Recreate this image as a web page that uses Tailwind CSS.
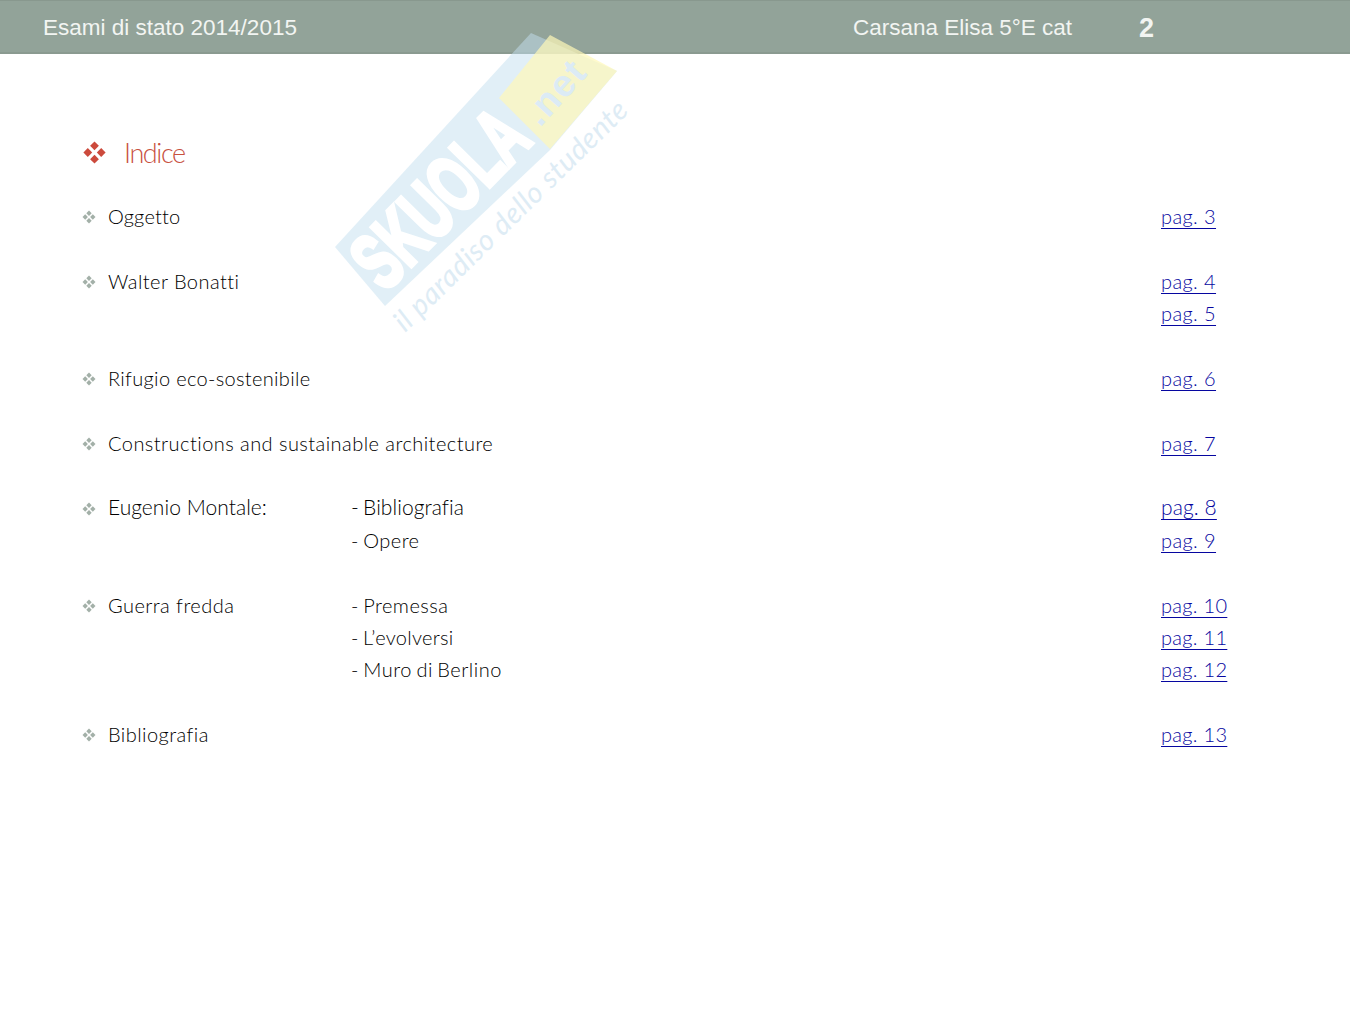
<!DOCTYPE html>
<html lang="it">
<head>
<meta charset="utf-8">
<script src="https://cdn.jsdelivr.net/npm/@tailwindcss/browser@4"></script>
</head>
<body class="bg-white">
<div class="relative w-[1350px] h-[1013px] overflow-hidden bg-white font-['Lato',sans-serif] text-black">
  <header class="flex items-center h-[54px] pl-[43px] pt-[3px] bg-[#92a399] border-t border-t-[#88988e] border-b-2 border-b-[#8a9a90] text-[#f2f5f2] font-['Liberation_Sans',sans-serif] text-[22.5px]">
    <span class="w-[810px]">Esami di stato 2014/2015</span>
    <span class="w-[286px]">Carsana Elisa 5°E cat</span>
    <span class="font-bold text-[27px]">2</span>
  </header>

  <section class="pt-[80px] pl-[83px] pr-[100px]">
    <h1 class="flex items-center h-[38px] text-[27px] font-light text-[#c8513f] tracking-[-1.4px]">
      <svg class="w-[23px] h-[23px] mr-[18px] -translate-y-px" viewBox="0 0 23 23"><g fill="#cc4a3c"><path d="M11.500 .4 15.900 4.800 11.500 9.200 7.100 4.800Z"/><path d="M11.500 13.800 15.900 18.200 11.500 22.600 7.100 18.200Z"/><path d="M4.800 7.100 9.200 11.500 4.800 15.900 .4 11.500Z"/><path d="M18.200 7.100 22.600 11.500 18.200 15.900 13.800 11.500Z"/></g></svg>
      Indice
    </h1>

    <div class="mt-[28px] grid grid-cols-[25px_243px_810px_auto] auto-rows-[32.4px] items-center text-[20px] font-light tracking-[0.45px]">
      <svg class="w-[14px] h-[14px] -ml-px mt-[2px]" viewBox="0 0 14 14"><g fill="#a3b0a8"><path d="M7 .5 9.700 3.200 7 5.900 4.300 3.200Z"/><path d="M7 8.100 9.700 10.800 7 13.500 4.300 10.800Z"/><path d="M3.200 4.300 5.900 7 3.200 9.700 .5 7Z"/><path d="M10.800 4.300 13.500 7 10.800 9.700 8.100 7Z"/></g></svg>
      <span class="tracking-[0.2px]">Oggetto</span><span></span><a class="text-[#0606a0] tracking-[0.4px] underline underline-offset-[4px] decoration-1 [text-decoration-skip-ink:none]" href="#">pag. 3</a>

      <span class="col-span-4"></span>

      <svg class="w-[14px] h-[14px] -ml-px mt-[2px]" viewBox="0 0 14 14"><g fill="#a3b0a8"><path d="M7 .5 9.700 3.200 7 5.900 4.300 3.200Z"/><path d="M7 8.100 9.700 10.800 7 13.500 4.300 10.800Z"/><path d="M3.200 4.300 5.900 7 3.200 9.700 .5 7Z"/><path d="M10.800 4.300 13.500 7 10.800 9.700 8.100 7Z"/></g></svg>
      <span>Walter Bonatti</span><span></span><a class="text-[#0606a0] tracking-[0.4px] underline underline-offset-[4px] decoration-1 [text-decoration-skip-ink:none]" href="#">pag. 4</a>
      <span></span><span></span><span></span><a class="text-[#0606a0] tracking-[0.4px] underline underline-offset-[4px] decoration-1 [text-decoration-skip-ink:none]" href="#">pag. 5</a>

      <span class="col-span-4"></span>

      <svg class="w-[14px] h-[14px] -ml-px mt-[2px]" viewBox="0 0 14 14"><g fill="#a3b0a8"><path d="M7 .5 9.700 3.200 7 5.900 4.300 3.200Z"/><path d="M7 8.100 9.700 10.800 7 13.500 4.300 10.800Z"/><path d="M3.200 4.300 5.900 7 3.200 9.700 .5 7Z"/><path d="M10.800 4.300 13.500 7 10.800 9.700 8.100 7Z"/></g></svg>
      <span class="tracking-[0.33px]">Rifugio eco-sostenibile</span><span></span><a class="text-[#0606a0] tracking-[0.4px] underline underline-offset-[4px] decoration-1 [text-decoration-skip-ink:none]" href="#">pag. 6</a>

      <span class="col-span-4"></span>

      <svg class="w-[14px] h-[14px] -ml-px mt-[2px]" viewBox="0 0 14 14"><g fill="#a3b0a8"><path d="M7 .5 9.700 3.200 7 5.900 4.300 3.200Z"/><path d="M7 8.100 9.700 10.800 7 13.500 4.300 10.800Z"/><path d="M3.200 4.300 5.900 7 3.200 9.700 .5 7Z"/><path d="M10.800 4.300 13.500 7 10.800 9.700 8.100 7Z"/></g></svg>
      <span class="whitespace-nowrap">Constructions and sustainable architecture</span><span></span><a class="text-[#0606a0] tracking-[0.4px] underline underline-offset-[4px] decoration-1 [text-decoration-skip-ink:none]" href="#">pag. 7</a>

      <span class="col-span-4"></span>

      <svg class="w-[14px] h-[14px] -ml-px mt-[2px]" viewBox="0 0 14 14"><g fill="#a3b0a8"><path d="M7 .5 9.700 3.200 7 5.900 4.300 3.200Z"/><path d="M7 8.100 9.700 10.800 7 13.500 4.300 10.800Z"/><path d="M3.200 4.300 5.900 7 3.200 9.700 .5 7Z"/><path d="M10.800 4.300 13.500 7 10.800 9.700 8.100 7Z"/></g></svg>
      <span class="text-[21px] tracking-[0.05px] -mt-[2px]">Eugenio Montale:</span><span class="text-[21px] tracking-[0.05px] -mt-[2px] [word-spacing:-1.5px]">- Bibliografia</span><a class="text-[#0606a0] text-[21px] tracking-[0.1px] -mt-[2px] underline underline-offset-[4px] decoration-1 [text-decoration-skip-ink:none]" href="#">pag. 8</a>
      <span></span><span></span><span class="[word-spacing:-1.5px]">- Opere</span><a class="text-[#0606a0] tracking-[0.4px] underline underline-offset-[4px] decoration-1 [text-decoration-skip-ink:none]" href="#">pag. 9</a>

      <span class="col-span-4"></span>

      <svg class="w-[14px] h-[14px] -ml-px mt-[2px]" viewBox="0 0 14 14"><g fill="#a3b0a8"><path d="M7 .5 9.700 3.200 7 5.900 4.300 3.200Z"/><path d="M7 8.100 9.700 10.800 7 13.500 4.300 10.800Z"/><path d="M3.200 4.300 5.900 7 3.200 9.700 .5 7Z"/><path d="M10.800 4.300 13.500 7 10.800 9.700 8.100 7Z"/></g></svg>
      <span>Guerra fredda</span><span class="[word-spacing:-1.5px]">- Premessa</span><a class="text-[#0606a0] tracking-[0.3px] underline underline-offset-[4px] decoration-1 [text-decoration-skip-ink:none]" href="#">pag. 10</a>
      <span></span><span></span><span class="[word-spacing:-1.5px] tracking-[0.3px]">- L’evolversi</span><a class="text-[#0606a0] tracking-[0.3px] underline underline-offset-[4px] decoration-1 [text-decoration-skip-ink:none]" href="#">pag. 11</a>
      <span></span><span></span><span class="[word-spacing:-1.5px] tracking-[0.5px] -mt-[2px]">- Muro di Berlino</span><a class="text-[#0606a0] tracking-[0.3px] -mt-[2px] underline underline-offset-[4px] decoration-1 [text-decoration-skip-ink:none]" href="#">pag. 12</a>

      <span class="col-span-4"></span>

      <svg class="w-[14px] h-[14px] -ml-px mt-[2px]" viewBox="0 0 14 14"><g fill="#a3b0a8"><path d="M7 .5 9.700 3.200 7 5.900 4.300 3.200Z"/><path d="M7 8.100 9.700 10.800 7 13.500 4.300 10.800Z"/><path d="M3.200 4.300 5.900 7 3.200 9.700 .5 7Z"/><path d="M10.800 4.300 13.500 7 10.800 9.700 8.100 7Z"/></g></svg>
      <span>Bibliografia</span><span></span><a class="text-[#0606a0] tracking-[0.3px] underline underline-offset-[4px] decoration-1 [text-decoration-skip-ink:none]" href="#">pag. 13</a>
    </div>
  </section>

  <svg class="absolute left-0 top-0 w-[1350px] h-[400px] pointer-events-none" viewBox="0 0 1350 400">
    <polygon points="335,247 531,33 617,71 550,150 385,306" fill="#c4dff0" opacity=".5"/>
    <polygon points="499,98 550,35 617,71 550,149" fill="#fff8b8" opacity=".7"/>
    <g transform="translate(385,293) rotate(-45.500) scale(1,1.12)" font-family="Liberation Sans, sans-serif" font-weight="700" fill="#fff" stroke="#fff" stroke-width="4">
      <text font-size="72" textLength="212" lengthAdjust="spacingAndGlyphs">SKUOLA</text>
    </g>
    <g transform="translate(540,128) rotate(-48)" font-family="Liberation Sans, sans-serif" font-weight="700" fill="#dcebf5">
      <text font-size="38" textLength="72" lengthAdjust="spacing">.net</text>
    </g>
    <g transform="translate(405,333) rotate(-44.500)" font-family="Lato, sans-serif" font-style="italic" fill="#deecf5">
      <text font-size="29" textLength="315" lengthAdjust="spacing">il paradiso dello studente</text>
    </g>
  </svg>
</div>
</body>
</html>
